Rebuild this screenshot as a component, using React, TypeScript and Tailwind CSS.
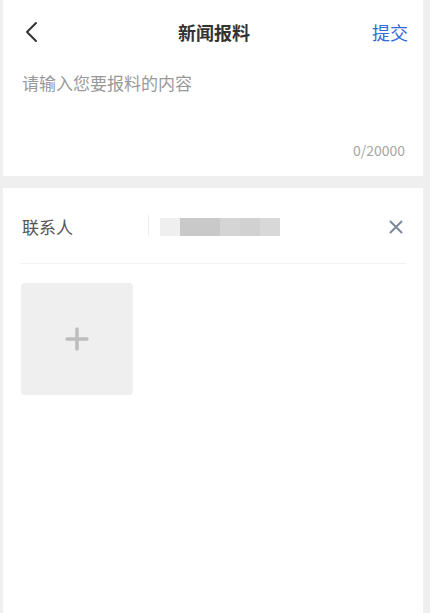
const font = { fontFamily: '"Noto Sans CJK SC", "Noto Sans", sans-serif' }

const blur = ['bg-[#efefef]', 'bg-[#c9c9c9]', 'bg-[#c9c9c9]', 'bg-[#d5d5d5]', 'bg-[#d1d1d1]', 'bg-[#d8d8d8]']

export default function App() {
  return (
    <div className="h-[613px] overflow-hidden bg-[#efefef] pl-[3px] pr-[7px] flex flex-col" style={font}>

      {/* Header + content input */}
      <div className="bg-white h-[176px] flex flex-col">
        <div className="h-[64px] flex items-center justify-between px-[20px]">
          <svg width="16" height="22" viewBox="0 0 16 22" fill="none" className="ml-[1px]">
            <path d="M12 2L3 11l9 9" stroke="#333" strokeWidth="2" strokeLinecap="round" strokeLinejoin="round" />
          </svg>
          <h1 className="text-[18px] font-bold text-[#333] leading-none ml-[16px]">新闻报料</h1>
          <button className="text-[18px] text-[#3468d8] leading-none mr-[-5px]">提交</button>
        </div>
        <p className="px-[19px] mt-[10px] text-[17px] text-[#999] leading-none">请输入您要报料的内容</p>
        <p className="mt-auto mb-[19px] px-[18px] text-right text-[14px] text-[#a5a5a5] leading-none">0/20000</p>
      </div>

      {/* Contact + upload */}
      <div className="bg-white flex-1 mt-[12px] px-[17px]">
        <div className="h-[76px] flex items-center border-b border-[#f2f2f2]">
          <span className="text-[17px] text-[#555] leading-none w-[128px] pl-[2px] pt-[2px]">联系人</span>
          <div className="w-px h-[21px] bg-[#ececec]" />
          <div className="flex ml-[11px] h-[18px] mt-[2px]">
            {blur.map((c, i) => (
              <div key={i} className={`w-[20px] h-full ${c}`} />
            ))}
          </div>
          <svg width="14" height="14" viewBox="0 0 14 14" className="ml-auto mr-[3px] mt-[2px]">
            <path d="M1.5 1.5l11 11M12.5 1.5l-11 11" stroke="#7e889a" strokeWidth="2" strokeLinecap="round" />
          </svg>
        </div>
        <div className="mt-[19px] ml-[1px] w-[112px] h-[112px] rounded-[4px] bg-[#efefef] flex items-center justify-center">
          <svg width="24" height="24" viewBox="0 0 24 24">
            <path d="M12 2v20M2 12h20" stroke="#bdbdbd" strokeWidth="3.5" strokeLinecap="round" />
          </svg>
        </div>
      </div>
    </div>
  )
}
